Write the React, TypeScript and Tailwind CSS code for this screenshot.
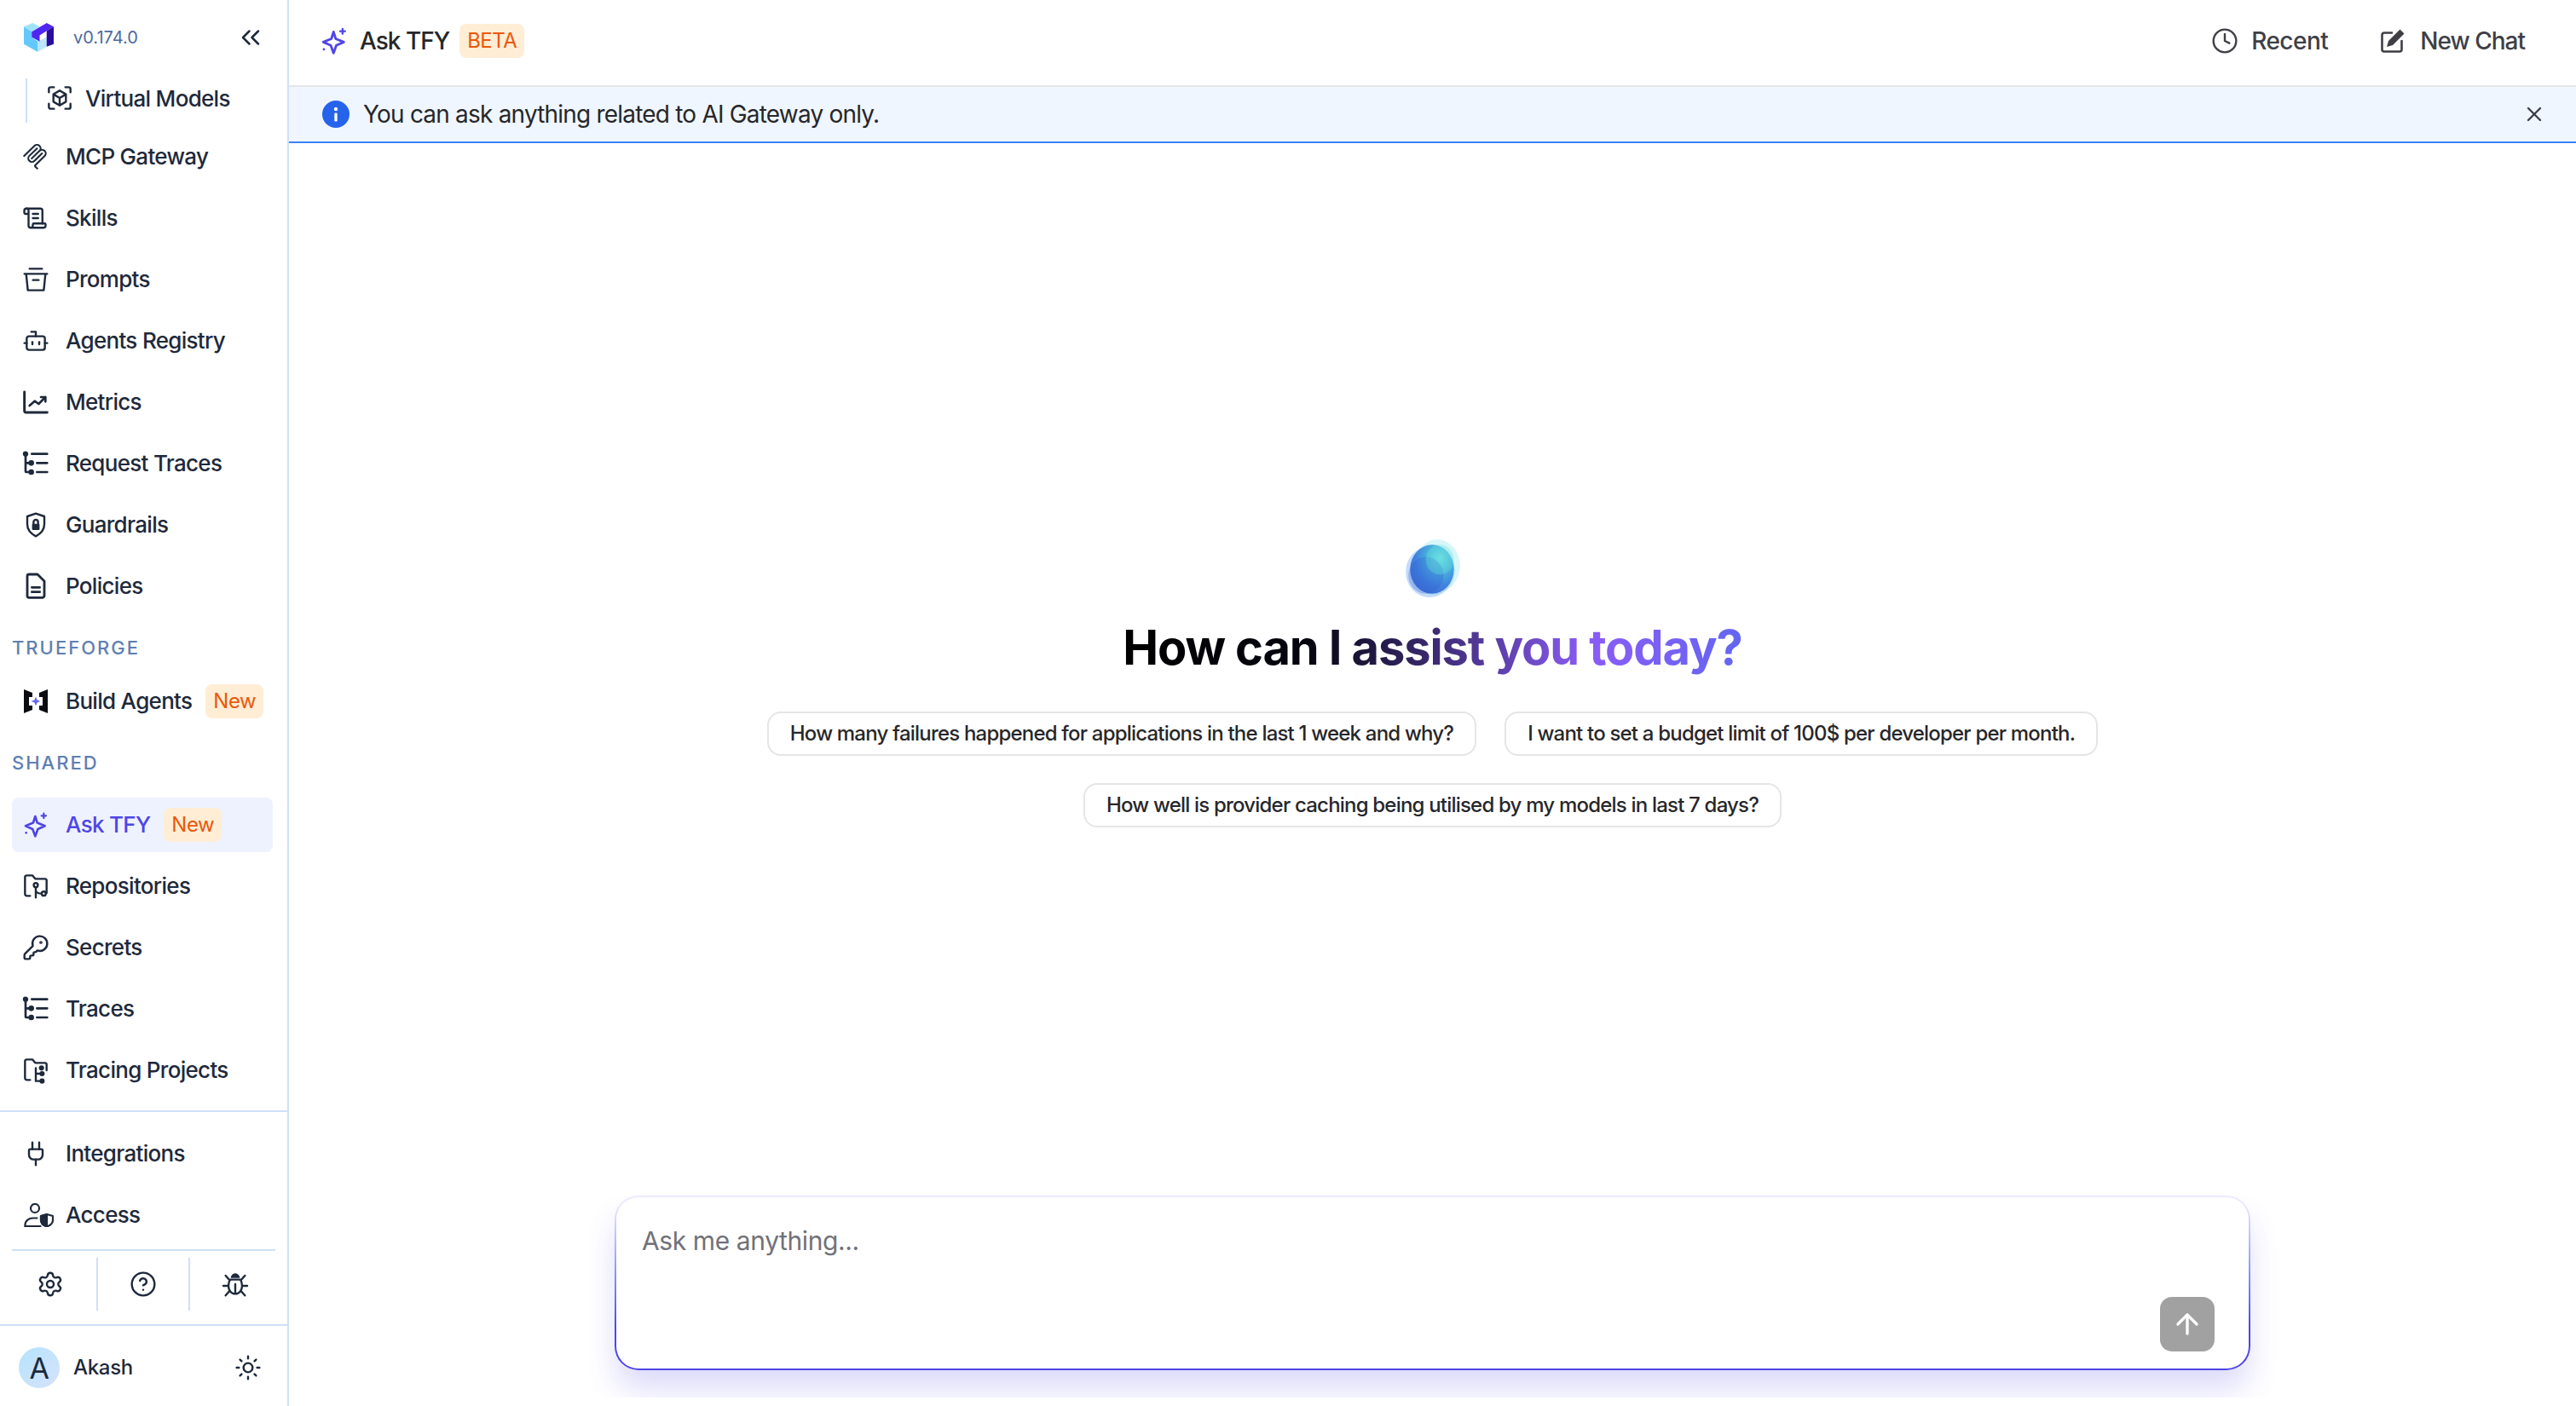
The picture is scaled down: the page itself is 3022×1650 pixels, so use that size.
import { ChevronsLeft, ScrollText, Bot, KeyRound, Plug, Settings, CircleHelp, Sun, Clock, X, ArrowUp } from "lucide-react";
import type { ReactNode } from "react";

const Svg = ({ children, className = "w-[32px] h-[32px]" }: { children: ReactNode; className?: string }) => (
  <svg viewBox="0 0 24 24" fill="none" stroke="currentColor" strokeWidth="1.8" strokeLinecap="round" strokeLinejoin="round" className={className}>
    {children}
  </svg>
);

const VirtualIcon = () => (
  <Svg>
    <path d="M2.500 7V4a1.500 1.500 0 0 1 1.500-1.500H7M17 2.500h3A1.500 1.500 0 0 1 21.500 4v3M21.500 17v3a1.500 1.500 0 0 1-1.500 1.500h-3M7 21.500H4A1.500 1.500 0 0 1 2.500 20v-3" />
    <path d="M12 5.500l5.500 3.200v6.600L12 18.500l-5.500-3.200V8.700zM6.500 8.700l5.500 3.300 5.500-3.300M12 12v6.500" />
  </Svg>
);

const McpIcon = () => (
  <svg viewBox="0 0 24 24" fill="currentColor" className="w-[30px] h-[30px]">
    <path d="M15.688 2.343a2.588 2.588 0 00-3.61 0l-9.626 9.44a.863.863 0 01-1.203 0 .823.823 0 010-1.18l9.626-9.44a4.313 4.313 0 016.016 0 4.116 4.116 0 011.204 3.54 4.3 4.3 0 013.609 1.18l.05.05a4.115 4.115 0 010 5.9l-8.706 8.537a.274.274 0 000 .393l1.788 1.754a.823.823 0 010 1.18.863.863 0 01-1.203 0l-1.788-1.753a1.92 1.92 0 010-2.754l8.706-8.538a2.47 2.47 0 000-3.54l-.05-.049a2.588 2.588 0 00-3.607-.003l-7.172 7.034-.002.002-.098.097a.863.863 0 01-1.204 0 .823.823 0 010-1.18l7.273-7.133a2.47 2.47 0 00-.003-3.537z" />
    <path d="M14.485 4.703a.823.823 0 000-1.18.863.863 0 00-1.204 0l-7.119 6.982a4.115 4.115 0 000 5.9 4.314 4.314 0 006.016 0l7.12-6.982a.823.823 0 000-1.18.863.863 0 00-1.204 0l-7.119 6.982a2.588 2.588 0 01-3.61 0 2.47 2.47 0 010-3.54l7.12-6.982z" />
  </svg>
);

const PromptsIcon = () => (
  <Svg>
    <path d="M6.500 2.500h11M2 7h20M3.500 7l1.500 14.500h14L20.500 7M9.500 12.500h5" />
  </Svg>
);

const MetricsIcon = () => (
  <Svg>
    <path d="M2 3v16.500A1.500 1.500 0 0 0 3.500 21H22" strokeWidth="2.200" />
    <path d="M6.500 15l4.500-4 3.500 2.500 6-6M16.500 7.500h4v4" strokeWidth="2" />
  </Svg>
);

const TracesIcon = () => (
  <Svg>
    <circle cx="3" cy="3.500" r="1.500" fill="currentColor" />
    <path d="M3 4v14.500a1 1 0 0 0 1 1H7M3 11.500H7M8.500 3.500H22M13 11.500h9M13 19.500h9" strokeWidth="2" />
    <circle cx="8" cy="11.500" r="1.600" fill="currentColor" />
    <circle cx="8" cy="19.500" r="1.600" fill="currentColor" />
  </Svg>
);

const GuardIcon = () => (
  <Svg>
    <path d="M12 2l7.500 2.500v7c0 5-3.300 8.300-7.500 10.500-4.200-2.200-7.500-5.500-7.500-10.500v-7z" />
    <path d="M10 11V9.500a2 2 0 0 1 4 0V11" />
    <rect x="8.700" y="11" width="6.600" height="5.500" rx="0.800" fill="currentColor" stroke="none" />
  </Svg>
);

const FileIcon = () => (
  <Svg>
    <path d="M6 1.500h7.500L19.500 7.500V20a2 2 0 0 1-1.500 2H6a1.500 1.500 0 0 1-1.500-1.500V3A1.500 1.500 0 0 1 6 1.500z" strokeWidth="2.100" />
    <path d="M8.500 13h7M8.500 17h7" strokeWidth="2" />
  </Svg>
);

const BuildIcon = () => (
  <svg viewBox="0 0 28 28" className="ml-[2px] w-[28px] h-[28px]">
    <path d="M0 0l10 4v5H6v10h4v5l-10 4z" fill="#0b0b12" />
    <path d="M28 0l-10 4v5h4v10h-4v5l10 4z" fill="#0b0b12" />
    <path d="M14 8.500l1.500 4 4 1.500-4 1.500-1.500 4-1.500-4-4-1.500 4-1.500z" fill="#6366f1" />
  </svg>
);

const SparkIcon = ({ className = "w-[32px] h-[32px]" }: { className?: string }) => (
  <Svg className={className}>
    <path d="M11.500 4.500l1.800 5.700 6.700 2.800-6.200 2.700-2.300 6.300-2.300-6.300-6.200-2.700 6.700-2.800z" strokeWidth="2" />
    <path d="M19 2v4M17 4h4" strokeWidth="1.700" />
    <circle cx="3.500" cy="19" r="1" fill="currentColor" stroke="none" />
  </Svg>
);

const RepoIcon = () => (
  <Svg>
    <path d="M7 20.500H4a1.500 1.500 0 0 1-1.500-1.500V4A1.500 1.500 0 0 1 4 2.500h5l2.500 3H20A1.500 1.500 0 0 1 21.500 7v11" />
    <circle cx="12" cy="11" r="1.800" />
    <circle cx="19" cy="18.500" r="1.800" />
    <path d="M12 13v9M12 15.500c0 2 2.500 3 5 3" />
  </Svg>
);

const ProjectIcon = () => (
  <Svg>
    <path d="M7 20.500H4a1.500 1.500 0 0 1-1.500-1.500V4A1.500 1.500 0 0 1 4 2.500h5l2.500 3H20A1.500 1.500 0 0 1 21.500 7v5" />
    <path d="M12 10v11.500h3M12 15h3" />
    <circle cx="17" cy="10" r="1.400" fill="currentColor" />
    <circle cx="17.500" cy="15" r="1.400" fill="currentColor" />
    <circle cx="17.500" cy="21.500" r="1.400" fill="currentColor" />
  </Svg>
);

const AccessIcon = () => (
  <svg viewBox="0 0 35 28" fill="none" stroke="currentColor" strokeWidth="2.200" strokeLinecap="round" strokeLinejoin="round" className="ml-[2px] w-[35px] h-[28px]">
    <circle cx="13" cy="6" r="5" />
    <path d="M1.500 27v-1.500c0-5 4.500-8 9-8h5" />
    <path d="M1.500 27h18" />
    <path d="M27 13l7 2v5c0 3.500-3 6-7 7.500-4-1.500-7-4-7-7.500v-5z" />
    <path d="M27 13v14.500c-4-1.500-7-4-7-7.500v-5z" fill="currentColor" />
  </svg>
);

const BugIcon = () => (
  <Svg>
    <path d="M8 6.500a4 4 0 0 1 8 0z" fill="currentColor" stroke="none" />
    <path d="M7.500 8h9c1.200 1.500 1.500 3.500 1.500 5.500 0 4-2.500 7-6 7s-6-3-6-7c0-2 .3-4 1.500-5.500zM12 12v8.500M3.500 4.500l3.500 4M20.500 4.500l-3.500 4M1.500 13.500h4.500M18 13.500h4.500M3.500 22l3.500-4M20.500 22l-3.500-4" />
  </Svg>
);

const PenIcon = () => (
  <svg viewBox="0 0 28 28" fill="none" className="w-[28px] h-[28px]">
    <path d="M13 4.500H4A2.500 2.500 0 0 0 1.500 7v17A2.500 2.500 0 0 0 4 26.500h18a2.500 2.500 0 0 0 2.500-2.500V14" stroke="currentColor" strokeWidth="2.600" strokeLinecap="round" />
    <path d="M22.500 0.500l5 5L14 19l-7 2 2-7z" fill="currentColor" />
  </svg>
);

const Logo = () => (
  <svg viewBox="0 0 35 35" className="w-[36px] h-[36px]">
    <path d="M0 5l10-4 8 4-9 6z" fill="#9fe3fb" />
    <path d="M0 5l9 6v6l7 5v12L0 25z" fill="#62c8fe" />
    <path d="M16 22l10-5v11l-10 6z" fill="#bde6fd" />
    <path d="M9 11l17-10 8 4-8 5-8 5v7l-9-5z" fill="#4f26f0" />
    <path d="M26 10l8-5v20l-8 3z" fill="#2a0b9e" />
  </svg>
);

const Badge = () => (
  <span className="ml-[16px] flex h-[40px] w-[68px] items-center justify-center rounded-[8px] bg-[#ffedd5] text-[24px] font-normal tracking-[-0.4px] text-[#ea580c]">New</span>
);

const NavItem = ({ icon, label, badge, active }: { icon: ReactNode; label: string; badge?: boolean; active?: boolean }) => (
  <div className={`mx-[14px] my-[4px] flex h-[64px] w-[306px] items-center rounded-[8px] pl-[14px] ${active ? "bg-[#eef2ff] text-[#4f46e5]" : "text-[#1e293b]"}`}>
    <span className="-ml-[2px] flex w-[37px] shrink-0 justify-start">{icon}</span>
    <span className="ml-[14px] -mt-[1px]">{label}</span>
    {badge && <Badge />}
  </div>
);

const SectionLabel = ({ text, className }: { text: string; className: string }) => (
  <div className={`flex items-center pl-[14px] text-[22px] font-medium tracking-[2px] text-[#5f7fb3] ${className}`}>{text}</div>
);

const Chip = ({ text }: { text: string }) => (
  <div className="flex h-[52px] items-center rounded-[16px] border-2 border-[#e5e5e5] bg-white px-[25px] text-[24px] font-medium tracking-[-0.8px] text-[#27272a]">{text}</div>
);

export default function App() {
  return (
    <div className="flex h-[1650px] w-[3022px] overflow-hidden bg-white font-['Inter',sans-serif]">
      <aside className="flex w-[339px] shrink-0 flex-col border-r-2 border-[#cfe0f8] text-[26px] font-medium tracking-[-0.7px]">
        <div className="flex h-[92px] shrink-0 items-start justify-between pl-[28px] pr-[25px] pt-[26px]">
          <div className="flex items-center">
            <Logo />
            <span className="ml-[22px] text-[20px] font-normal tracking-normal text-[#4d6a9e]">v0.174.0</span>
          </div>
          <ChevronsLeft className="h-[36px] w-[36px] text-[#1e293b]" strokeWidth={1.7} />
        </div>
        <div className="mb-[4px] ml-[30px] flex h-[52px] shrink-0 items-center border-l-2 border-[#cfe0f8] pb-[6px] pl-[22px] text-[#1e293b]">
          <VirtualIcon />
          <span className="ml-[14px]">Virtual Models</span>
        </div>
        <NavItem icon={<McpIcon />} label="MCP Gateway" />
        <NavItem icon={<ScrollText className="h-[30px] w-[30px]" strokeWidth={1.9} />} label="Skills" />
        <NavItem icon={<PromptsIcon />} label="Prompts" />
        <NavItem icon={<Bot className="h-[32px] w-[32px]" strokeWidth={1.8} />} label="Agents Registry" />
        <NavItem icon={<MetricsIcon />} label="Metrics" />
        <NavItem icon={<TracesIcon />} label="Request Traces" />
        <NavItem icon={<GuardIcon />} label="Guardrails" />
        <NavItem icon={<FileIcon />} label="Policies" />
        <SectionLabel text="TRUEFORGE" className="h-[63px] pt-[10px]" />
        <NavItem icon={<BuildIcon />} label="Build Agents" badge />
        <SectionLabel text="SHARED" className="h-[73px]" />
        <NavItem icon={<SparkIcon />} label="Ask TFY" badge active />
        <NavItem icon={<RepoIcon />} label="Repositories" />
        <NavItem icon={<KeyRound className="h-[32px] w-[32px]" strokeWidth={1.8} />} label="Secrets" />
        <NavItem icon={<TracesIcon />} label="Traces" />
        <NavItem icon={<ProjectIcon />} label="Tracing Projects" />
        <div className="mb-[13px] mt-[11px] h-[2px] shrink-0 bg-[#cfe0f8]" />
        <NavItem icon={<Plug className="h-[32px] w-[32px]" strokeWidth={1.8} />} label="Integrations" />
        <NavItem icon={<AccessIcon />} label="Access" />
        <div className="mx-[14px] mt-[4px] flex h-[72px] shrink-0 flex-col border-t-2 border-[#cfe0f8] pt-[8px] text-[#1e293b]">
          <div className="grid h-[63px] grid-cols-[99px_110px_97px]">
            <div className="flex items-center justify-center pr-[10px]"><Settings className="h-[32px] w-[32px]" strokeWidth={1.8} /></div>
            <div className="flex items-center justify-center border-x-2 border-[#cfe0f8]"><CircleHelp className="h-[32px] w-[32px]" strokeWidth={1.8} /></div>
            <div className="flex items-center justify-center pl-[8px]"><BugIcon /></div>
          </div>
        </div>
        <div className="mt-[16px] flex h-[94px] shrink-0 items-center justify-between border-t-2 border-[#cfe0f8] pl-[22px] pr-[30px] pt-[6px] text-[#1e293b]">
          <div className="flex items-center">
            <div className="flex h-[48px] w-[48px] items-center justify-center rounded-full bg-gradient-to-br from-[#b5e4fd] to-[#d6e2fb] text-[34px] font-normal">A</div>
            <span className="ml-[16px] text-[24px] tracking-[-0.3px]">Akash</span>
          </div>
          <Sun className="h-[32px] w-[32px]" strokeWidth={1.8} />
        </div>
      </aside>

      <main className="flex min-w-0 flex-1 flex-col">
        <header className="flex h-[102px] shrink-0 items-center justify-between border-b-2 border-[#e5e5e5] pl-[36px] pr-[60px] pb-[4px] text-[#3f3f46]">
          <div className="flex items-center">
            <SparkIcon className="h-[34px] w-[34px] text-[#4f46e5]" />
            <span className="ml-[13px] text-[28px] font-medium tracking-[-1px] text-[#27272a]">Ask TFY</span>
            <span className="ml-[12px] flex h-[40px] w-[76px] items-center justify-center rounded-[8px] bg-[#ffedd5] text-[24px] tracking-[-0.5px] text-[#ea580c]">BETA</span>
          </div>
          <div className="flex items-center text-[28px] font-medium tracking-[-0.5px]">
            <Clock className="h-[32px] w-[32px]" strokeWidth={1.8} />
            <span className="ml-[15px]">Recent</span>
            <span className="ml-[62px]"><PenIcon /></span>
            <span className="ml-[18px] tracking-[-1px]">New Chat</span>
          </div>
        </header>

        <div className="flex h-[66px] shrink-0 items-center justify-between border-b-2 border-[#3b82f6] bg-[#eff6ff] pl-[39px] pr-[35px] text-[28px] tracking-[-0.8px] text-[#27272a]">
          <div className="flex items-center">
            <span className="flex h-[32px] w-[32px] items-center justify-center rounded-full bg-[#2563eb]">
              <svg viewBox="0 0 32 32" className="h-[32px] w-[32px]">
                <circle cx="16" cy="10" r="2.200" fill="#fff" />
                <rect x="14.300" y="14.500" width="3.400" height="10" rx="1.200" fill="#fff" />
              </svg>
            </span>
            <span className="ml-[16px]">You can ask anything related to AI Gateway only.</span>
          </div>
          <X className="h-[28px] w-[28px] text-[#3f3f46]" strokeWidth={2.1} />
        </div>

        <section className="flex min-h-0 flex-1 flex-col items-center pt-[464px]">
          <svg viewBox="0 0 64 70" className="h-[72px] w-[66px]">
            <defs>
              <radialGradient id="blob" cx="0.68" cy="0.28" r="0.9">
                <stop offset="0" stopColor="#66dfe0" />
                <stop offset="0.3" stopColor="#3fb0da" />
                <stop offset="0.62" stopColor="#3579dc" />
                <stop offset="1" stopColor="#2f55ca" />
              </radialGradient>
            </defs>
            <ellipse cx="37" cy="31" rx="26" ry="30" fill="#bdf0f5" opacity="0.6" />
            <ellipse cx="28" cy="38" rx="27" ry="29" fill="#93bff8" opacity="0.55" />
            <ellipse cx="33" cy="36" rx="24" ry="29" fill="#a6d8f8" opacity="0.6" />
            <ellipse cx="31" cy="35" rx="25" ry="28" fill="url(#blob)" opacity="0.9" />
            <ellipse cx="24" cy="42" rx="20" ry="21" fill="#2f5ed0" opacity="0.3" />
            <ellipse cx="40" cy="24" rx="16" ry="17" fill="#67e2dd" opacity="0.35" />
          </svg>
          <h1 className="mt-[22px] bg-[linear-gradient(90deg,#000_0%,#050510_30%,#3b2a70_50%,#8b5cf6_75%,#6366f1_100%)] bg-clip-text text-[56px] font-bold leading-[68px] tracking-[-1.1px] text-transparent">How can I assist you today?</h1>
          <div className="mt-[41px] flex w-[1620px] flex-wrap justify-center gap-x-[33px] gap-y-[32px]">
            <Chip text="How many failures happened for applications in the last 1 week and why?" />
            <Chip text="I want to set a budget limit of 100$ per developer per month." />
            <Chip text="How well is provider caching being utilised by my models in last 7 days?" />
          </div>
        </section>

        <div className="mb-[10px] flex h-[237px] w-full shrink-0 justify-center overflow-hidden">
          <div className="h-[205px] w-[1919px] rounded-[28px] bg-gradient-to-b from-[#ece9fe] from-5% to-[#4f46e5] to-75% p-[2px] shadow-[0_24px_36px_-2px_rgba(79,70,229,0.2)]">
            <div className="relative h-full rounded-[26px] bg-white pl-[30px] pt-[31px]">
              <div className="text-[30px] leading-[40px] tracking-[-0.4px] text-[#71717a]">Ask me anything...</div>
              <div className="absolute bottom-[20px] right-[40px] flex h-[64px] w-[64px] items-center justify-center rounded-[14px] bg-[#a1a1a1]">
                <ArrowUp className="h-[38px] w-[38px] text-white" strokeWidth={2.1} />
              </div>
            </div>
          </div>
        </div>
      </main>
    </div>
  );
}
